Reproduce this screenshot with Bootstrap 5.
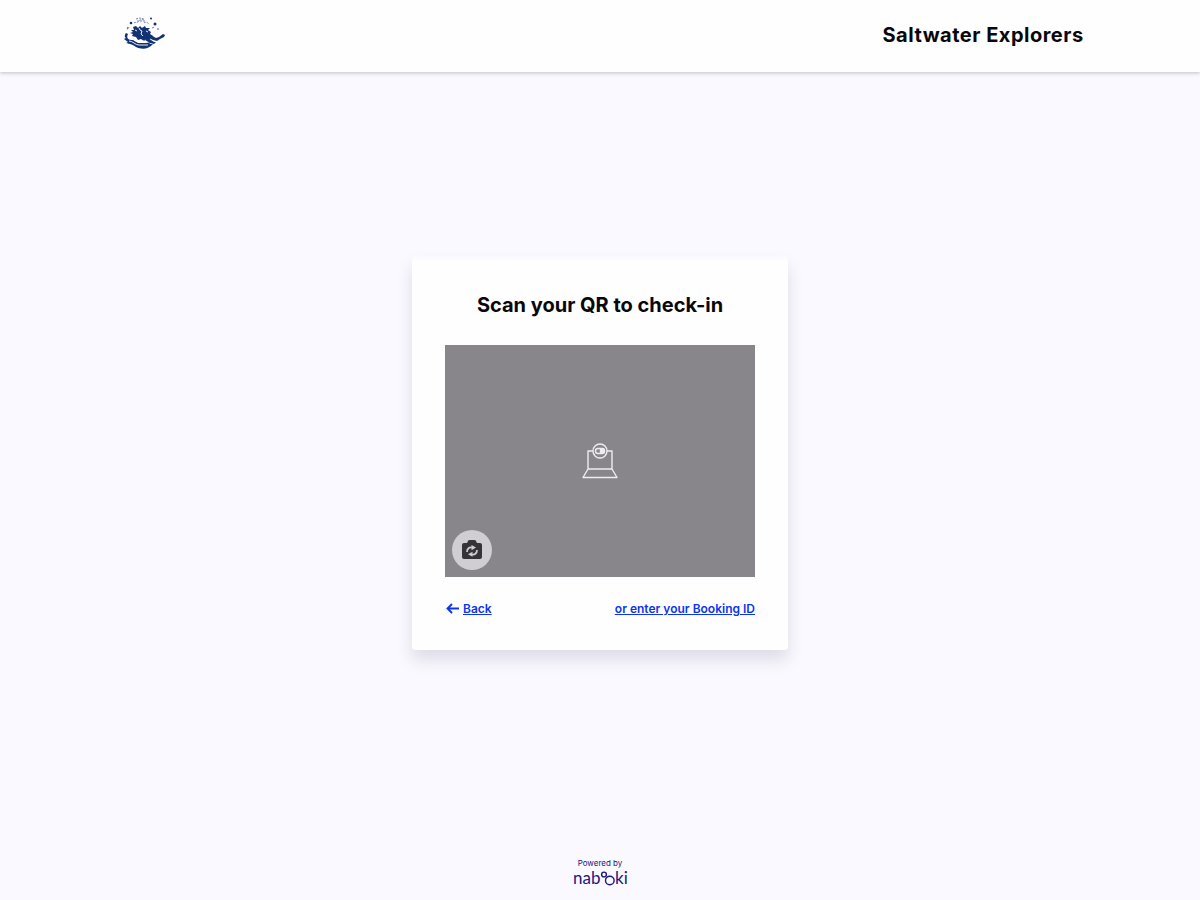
<!DOCTYPE html>
<html lang="en">
<head>
<meta charset="utf-8">
<meta name="viewport" content="width=device-width, initial-scale=1">
<title>Saltwater Explorers check-in</title>
<link href="https://cdn.jsdelivr.net/npm/bootstrap@5.3.0/dist/css/bootstrap.min.css" rel="stylesheet">
<style>
body { font-family: Inter, sans-serif; background: #faf9ff; color: #08080c; }
.site-header { height: 72px; background: #fefefe; box-shadow: 0 1px 4px rgba(20, 20, 40, .25); }
.site-header .container-fluid { padding: 0 9.7% 2px; }
.brand-name { font-size: 20px; line-height: 28px; font-weight: 700; letter-spacing: .025em; }
.site-logo { width: 42px; height: 34px; }
.checkin { width: 376px; padding: 33px; background: linear-gradient(#faf9ff, #fefefe 6px); border-radius: 4px; box-shadow: 0 10px 16px rgba(40, 40, 70, .13); }
.checkin h1 { font-size: 20px; line-height: 32px; font-weight: 700; margin-bottom: 24px; }
.viewfinder { aspect-ratio: 4 / 3; background: #89868b; }
.flip-camera { width: 40px; height: 40px; background: #d0ced3; left: 7px; bottom: 7px; }
.checkin a { font-size: 12px; line-height: 16px; font-weight: 600; color: #0b35ef; }
.site-footer { height: 66px; color: #1b1680; padding-top: 24px; }
.powered { font-size: 8px; line-height: 10px; }
.wordmark { font-family: Lato, sans-serif; font-size: 17px; fill: #1b1680; }
</style>
<script src="https://cdn.jsdelivr.net/npm/bootstrap@5.3.0/dist/js/bootstrap.bundle.min.js" defer></script>
</head>
<body class="d-flex flex-column min-vh-100">
<header class="site-header">
  <div class="container-fluid h-100 d-flex align-items-center justify-content-between">
    <svg class="site-logo ms-2 mb-1" viewBox="0 0 42 34" role="img" aria-label="Scuba diver logo">
      <g fill="#123273">
        <circle cx="7" cy="7" r="1.300"/><circle cx="31" cy="8" r="1.500"/><circle cx="27" cy="2.500" r="1"/><circle cx="34" cy="13" r=".7"/><circle cx="3.500" cy="12" r=".7"/>
        <path d="m9 11 3-1 2 2 2-2 2 2 3-2 1 2 4 0-2 2 3 2-1 2 3 2-3 1 0 2-4 0-2 2-3-2-3 1-2-3-4-1 1-2-3-1 3-1-2-2 3 0z"/>
        <path d="m22 18 5 1 5 3 3-1 4-3 2 1-1 2-4 2-3 2-4-1-4-2-5-1z"/>
        <path d="m23 21 4 3 3 2 2 0-2 2-4-1-5-3z"/>
        <path d="m2 17 2 1c-2 4 0 6 5 6l5 3 8 0 6-1-3 2 4 0c-4 5-11 6-17 3-4-3-6-3-10-4l2-1-4-3 2-1c-2-1-1-4 0-5z"/>
      </g>
      <g fill="none" stroke="#fff" stroke-width=".9"><path d="m15 12 1 2 2 1-1 3 2 2M11 14l2 1M5 25c4 0 6 4 10 4l9 0M10 24c3 2 6 2 10 1M22 15l2 1"/></g>
      <path d="M10 7c2-2 3 1 5-2s4 0 5-2M12 3l4-1 4 1M20 7c2-2 4 0 5 1M28 12l3-1M5 11l-2 3M13 5h8" fill="none" stroke="#7187b3" stroke-width="1" stroke-dasharray="2 1"/>
    </svg>
    <div class="brand-name">Saltwater Explorers</div>
  </div>
</header>
<main class="flex-grow-1 d-flex align-items-center justify-content-center">
  <section class="checkin">
    <h1 class="text-center">Scan your QR to check-in</h1>
    <div class="viewfinder position-relative d-flex align-items-center justify-content-center">
      <svg width="36" height="36" viewBox="0 0 36 36" fill="none" stroke="#ededf0" stroke-width="1.400" stroke-linejoin="round" aria-hidden="true">
        <path d="M11 8H6v18h24V8h-5M6 26 1 34.500h34L30 26"/><circle cx="18" cy="8" r="7"/><rect x="13.500" y="5.500" width="9" height="5" rx="2.500"/><path d="M18.500 6h2a2 2 0 0 1 0 4h-2z" fill="#ededf0"/>
      </svg>
      <button type="button" class="flip-camera btn rounded-circle border-0 p-0 position-absolute d-flex align-items-center justify-content-center" aria-label="Switch camera">
        <svg width="22" height="20" viewBox="0 0 22 20" aria-hidden="true">
          <path d="M3 3h3l1-2q.5-1 1.500-1h5q1 0 1.500 1l1 2h3q2 0 2 2v12q0 2-2 2H3q-2 0-2-2V5q0-2 2-2z" fill="#353238"/>
          <path d="M6 12c0-3.500 2.500-5 5-4.500M16 10c0 3.500-2.500 5-5 4.500" fill="none" stroke="#d0ced3" stroke-width="1.700"/>
          <path d="m10.500 5 4.500 2.500-4.500 2.700zM11.500 11.800v5L7 14.300z" fill="#d0ced3"/>
        </svg>
      </button>
    </div>
    <div class="d-flex justify-content-between align-items-center mt-4">
      <a href="#" class="d-flex align-items-center gap-1 text-decoration-none"><svg width="14" height="12" viewBox="0 0 14 12" fill="none" stroke="currentColor" stroke-width="1.900" aria-hidden="true"><path d="M14 5.500H2M7 1 2.500 5.500 7 10"/></svg><span class="text-decoration-underline">Back</span></a>
      <a href="#">or enter your Booking ID</a>
    </div>
  </section>
</main>
<footer class="site-footer d-flex flex-column align-items-center">
  <div class="powered">Powered by</div>
  <svg class="wordmark" width="56" height="22" viewBox="0 0 56 22" role="img" aria-label="nabooki">
    <text x="1" y="16">nab</text>
    <circle cx="32" cy="6.500" r="2.400" fill="none" stroke="#1b1680" stroke-width="1.400"/>
    <circle cx="37.800" cy="12.500" r="4.300" fill="none" stroke="#1b1680" stroke-width="1.400"/>
    <text x="43" y="16">ki</text>
  </svg>
</footer>
</body>
</html>
